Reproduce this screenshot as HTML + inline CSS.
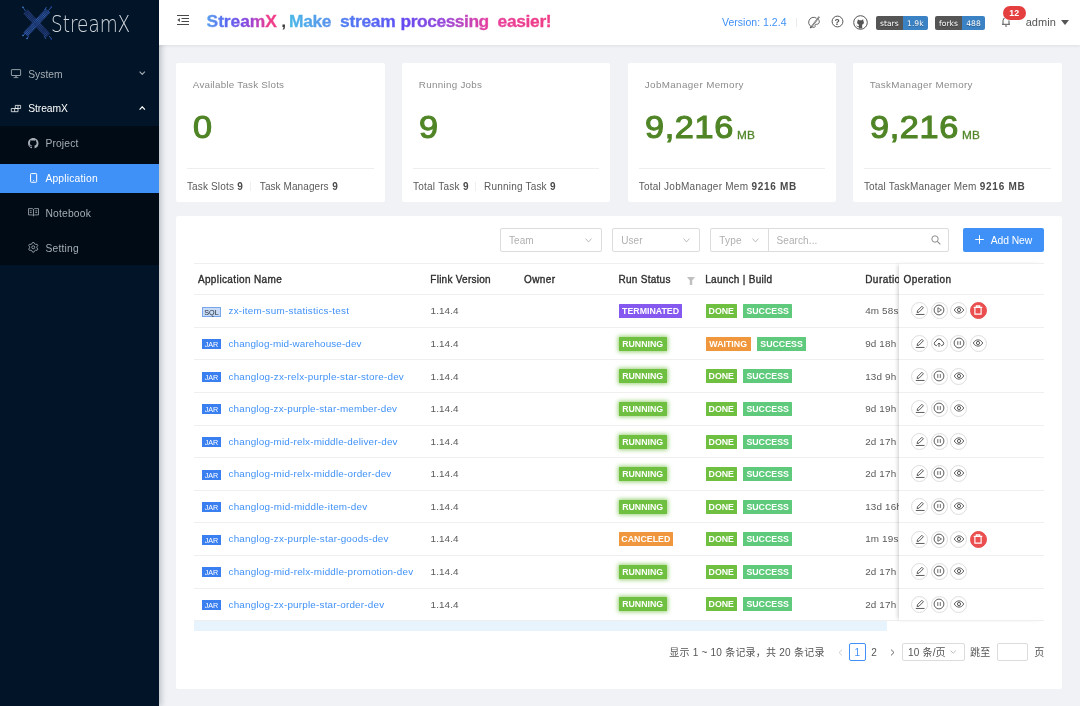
<!DOCTYPE html>
<html lang="en">
<head>
<meta charset="utf-8">
<title>StreamX</title>
<style>
*{box-sizing:border-box;margin:0;padding:0}
html,body{width:1080px;height:706px;overflow:hidden}
body{background:#f0f2f5;font-family:"Liberation Sans","Noto Sans CJK SC",sans-serif;font-size:10px;color:#595959;position:relative}
.abs,.t,svg{position:absolute}
.t{white-space:nowrap;line-height:20px;height:20px}
#side,#head,.card,#tb{will-change:transform}
#side{position:absolute;left:0;top:0;width:159px;height:706px;background:#021528;box-shadow:2px 0 6px rgba(0,21,41,.24);z-index:5}
#sub{position:absolute;left:0;top:126px;width:159px;height:139px;background:#010b16}
#sel{position:absolute;left:0;top:164px;width:159px;height:29px;background:#4091f7}
#head{position:absolute;left:159px;top:0;width:921px;height:45px;background:#fff;box-shadow:0 1px 3px rgba(0,21,41,.08);z-index:6}
.g{-webkit-background-clip:text;background-clip:text;color:transparent;-webkit-text-fill-color:transparent}
.bdg{position:absolute;top:16px;height:14px;border-radius:2px;overflow:hidden;font-family:"DejaVu Sans","Liberation Sans",sans-serif;font-size:7.6px;line-height:14px;color:#fff;white-space:nowrap}
.bdg span{position:absolute;top:0;height:14px;line-height:15px;text-align:center;text-shadow:0 .7px 0 rgba(1,1,1,.3)}
.card{position:absolute;top:63px;height:139px;background:#fff;border-radius:2px}
.hr{position:absolute;height:1px;background:#eeeeee}
#tb{position:absolute;left:176px;top:216px;width:886px;height:473px;background:#fff;border-radius:2px}
.box{position:absolute;border:1px solid #dcdcdc;border-radius:2px;background:#fff}
.hl{position:absolute;height:1px;background:#efefef}
.tg{position:absolute;width:19px;height:10px;font-size:7.2px;line-height:11px;text-align:center}
.tg.jar{background:#3a7ff0;color:#fff}
.tg.sql{background:#c8dbf6;color:#1d2733;border:1px solid #79a6ea;line-height:9px}
.st{position:absolute;height:14.3px;line-height:14.3px;font-size:8.8px;font-weight:bold;color:#fff;text-align:center;border-radius:.5px;white-space:nowrap}
.run{background:#6fbf40;box-shadow:0 0 4px 1px rgba(111,191,64,.7)}
.done{background:#6fbf40}
.suc{background:#5fca7c}
.term{background:#8558f0}
.warn{background:#f0963c}
#fix{position:absolute;left:723px;top:47px;width:145px;height:358px;background:#fff;box-shadow:-3px 0 4px -2px rgba(0,0,0,.2)}
.op{position:absolute;width:17px;height:17px;border-radius:50%;border:1px solid #dedede;background:#fff}
.op svg{left:1.5px;top:1px}
.op.del{background:#ea4e4e;border-color:#ea4e4e}
</style>
</head>
<body>
<div id="side">
<div id="sub"></div>
<div id="sel"></div>
<svg style="left:22px;top:6px" width="31" height="34" viewBox="0 0 31 34"><defs><pattern id="dots" width="1.6" height="1.6" patternUnits="userSpaceOnUse" patternTransform="rotate(41)"><rect width="1.6" height="1.6" fill="#11244f"/><rect width=".9" height=".9" fill="#28488c"/></pattern><pattern id="dots2" width="1.6" height="1.6" patternUnits="userSpaceOnUse" patternTransform="rotate(-41)"><rect width="1.6" height="1.6" fill="#142d63"/><rect width=".9" height=".9" fill="#3564b0"/></pattern></defs>
<path d="M3.500 5.500L26 29.500" stroke="url(#dots)" stroke-width="6" fill="none"/>
<path d="M26 4.500L3.500 28.500" stroke="url(#dots2)" stroke-width="6" fill="none"/>
<path d="M.8 1.200L3.500 5M29.500 1L26.500 4.500M24.500 1L22.500 4M1 29.500L4 27M29.500 33L27 30M24 33L22 30M5 33L6.500 30" stroke="#3565c0" stroke-width=".8" fill="none"/>
<circle cx="1" cy="1.300" r=".8" fill="#4a8ad8"/><circle cx="1" cy="29.500" r=".8" fill="#4a8ad8"/><circle cx="5" cy="32.500" r=".7" fill="#4a8ad8"/><circle cx="29.300" cy="1" r=".7" fill="#2848b0"/><circle cx="29.300" cy="33" r=".7" fill="#2848b0"/></svg><span class="t" style="left:50.8px;top:14px;font-size:22.6px;font-weight:200;color:#d3d8de;font-family:'DejaVu Sans','Liberation Sans',sans-serif;transform:scaleX(.815);transform-origin:0 50%;">StreamX</span>
<svg style="left:10px;top:69px" width="12" height="10" viewBox="0 0 12 10"><rect x="1.400" y=".6" width="9.200" height="5.900" rx=".5" fill="none" stroke="#a6adb4" stroke-width=".9"/><path d="M6 6.900v1.400" stroke="#a6adb4" stroke-width="1.200" fill="none"/><path d="M3.600 8.600h4.800" stroke="#a6adb4" stroke-width=".8" fill="none"/></svg><span class="t" style="left:28.2px;top:65px;font-size:10.3px;color:#a6adb4;letter-spacing:0.011px;">System</span><svg style="left:139px;top:71px" width="6.5" height="4.2" viewBox="0 0 6.5 4.2"><path d="M.6 .6L3.25 3.4000000000000004L5.9 .6" stroke="#a6adb4" stroke-width="1.1" fill="none"/></svg>
<svg style="left:10px;top:104px" width="12" height="9" viewBox="0 0 12 9"><path d="M5.300 1.400h5.300v3.100H5.300zM8 1.400v3.100M1.300 4.500h6.700v3.200H1.300zM4.650 4.500v3.200" stroke="#ffffff" stroke-width=".75" fill="none" stroke-linejoin="miter"/></svg><span class="t" style="left:28.2px;top:99px;font-size:10.3px;color:#ffffff;letter-spacing:-0.06px;">StreamX</span><svg style="left:139px;top:106.3px" width="6.5" height="4.2" viewBox="0 0 6.5 4.2"><path d="M.6 3.6L3.25 .8L5.9 3.6" stroke="#ffffff" stroke-width="1.2" fill="none"/></svg>
<svg style="left:28.2px;top:138.2px" width="10.5" height="10.5" viewBox="0 0 16 16"><path fill="#a6adb4" d="M8 0C3.58 0 0 3.58 0 8c0 3.54 2.29 6.53 5.47 7.59.4.07.55-.17.55-.38 0-.19-.01-.82-.01-1.49-2.01.37-2.53-.49-2.69-.94-.09-.23-.48-.94-.82-1.13-.28-.15-.68-.52-.01-.53.63-.01 1.08.58 1.23.82.72 1.21 1.87.87 2.33.66.07-.52.28-.87.51-1.07-1.78-.2-3.64-.89-3.64-3.95 0-.87.31-1.59.82-2.15-.08-.2-.36-1.02.08-2.12 0 0 .67-.21 2.2.82.64-.18 1.32-.27 2-.27s1.36.09 2 .27c1.53-1.04 2.2-.82 2.2-.82.44 1.1.16 1.92.08 2.12.51.56.82 1.27.82 2.15 0 3.07-1.87 3.75-3.65 3.95.29.25.54.73.54 1.48 0 1.07-.01 1.93-.01 2.2 0 .21.15.46.55.38A8.01 8.01 0 0 0 16 8c0-4.42-3.58-8-8-8z"/></svg><span class="t" style="left:45.4px;top:134px;font-size:10.3px;color:#a6adb4;letter-spacing:0.14px;">Project</span>
<svg style="left:30px;top:173.2px" width="8" height="11" viewBox="0 0 8 11"><rect x=".55" y=".55" width="6.100" height="8.700" rx=".7" fill="none" stroke="#ffffff" stroke-width="1"/><circle cx="3.600" cy="7.600" r=".5" fill="#ffffff"/></svg><span class="t" style="left:45.4px;top:169px;font-size:10.3px;color:#ffffff;letter-spacing:0.192px;">Application</span>
<svg style="left:28px;top:208.3px" width="12" height="9" viewBox="0 0 12 9"><path d="M.5 .6h3.800l1.200.8 1.200-.8h3.800v6.300H6.700L5.500 7.800 4.300 6.900H.5zM5.500 1.400v6.400M1.800 2.800h1.900M1.800 4.500h1.900M7.300 2.800h1.900M7.300 4.500h1.900" stroke="#a6adb4" stroke-width=".8" fill="none"/></svg><span class="t" style="left:45.4px;top:204px;font-size:10.3px;color:#a6adb4;letter-spacing:0.201px;">Notebook</span>
<svg style="left:28.1px;top:242.3px" width="10.5" height="10.6" viewBox="0 0 10.5 10.6"><path d="M4.61 0.44L5.89 0.44L6.67 1.88L7.50 2.36L9.14 2.32L9.78 3.42L8.92 4.82L8.92 5.78L9.78 7.18L9.14 8.28L7.50 8.24L6.67 8.72L5.89 10.16L4.61 10.16L3.83 8.72L3.00 8.24L1.36 8.28L0.72 7.18L1.58 5.78L1.58 4.82L0.72 3.42L1.36 2.32L3.00 2.36L3.83 1.88z" stroke="#a6adb4" stroke-width=".85" fill="none" stroke-linejoin="round"/><circle cx="5.25" cy="5.3" r="1.500" stroke="#a6adb4" stroke-width=".85" fill="none"/></svg><span class="t" style="left:45.4px;top:239px;font-size:10.3px;color:#a6adb4;letter-spacing:0.206px;">Setting</span>
</div>
<div id="head">
<svg style="left:18px;top:15px" width="12" height="10" viewBox="0 0 12 10"><path d="M0 .5h12M4.500 3.500H12M4.500 6.500H12M0 9.500h12" stroke="#4a4a4a" stroke-width="1" fill="none"/><path d="M2.900 2.900v4.200L.3 5z" fill="#4a4a4a"/></svg>
<span class="t g" style="left:47.6px;top:11px;font-size:17.4px;font-weight:bold;letter-spacing:-0.063px;-webkit-text-stroke:.35px transparent;background-image:linear-gradient(90deg,#5a9fee 0%,#5a64f0 30%,#8448e0 55%,#bd43be 73%,#f03d8a 88%);">StreamX</span>
<span class="t" style="left:122.3px;top:11px;font-size:17.4px;font-weight:bold;color:#3a3a3a;">,</span>
<span class="t g" style="left:130.1px;top:11px;font-size:17.4px;font-weight:bold;letter-spacing:-0.405px;-webkit-text-stroke:.35px transparent;background-image:linear-gradient(90deg,#48b8e6 0%,#5b92ec 100%);">Make</span>
<span class="t g" style="left:181.1px;top:11px;font-size:17.4px;font-weight:bold;letter-spacing:-0.289px;-webkit-text-stroke:.35px transparent;background-image:linear-gradient(90deg,#4f80f0 0%,#5d55f5 100%);">stream</span>
<span class="t g" style="left:241.6px;top:11px;font-size:17.4px;font-weight:bold;letter-spacing:-0.465px;-webkit-text-stroke:.35px transparent;background-image:linear-gradient(90deg,#6149f2 0%,#9a4ada 50%,#e83e9c 100%);">processing</span>
<span class="t g" style="left:338.6px;top:11px;font-size:17.4px;font-weight:bold;letter-spacing:-0.346px;-webkit-text-stroke:.35px transparent;background-image:linear-gradient(90deg,#ea3f9a 0%,#ef3d86 100%);">easier!</span>
<span class="t" style="left:563.0px;top:12px;font-size:10.5px;color:#4091f7;letter-spacing:0.022px;">Version: 1.2.4</span>
<div class="abs" style="left:637px;top:18px;width:1px;height:9px;background:#ebebeb"></div>
<svg style="left:648.5px;top:15.5px" width="13" height="13" viewBox="0 0 13 13"><path d="M8.500 2.200A5 5 0 1 0 6 11.300c1.200 0 1.300-.9 1.100-1.500-.3-.8.300-1.600 1.200-1.500 1.600.2 3-.8 3-2.500 0-.9-.3-1.700-.8-2.400" fill="none" stroke="#555" stroke-width=".9"/><path d="M11.300 .8L3.600 10.600l-1.300 1.500" stroke="#555" stroke-width="1.500" fill="none"/><path d="M11.300 .8L3.600 10.600" stroke="#fff" stroke-width=".45" fill="none"/></svg>
<svg style="left:671.7px;top:15.4px" width="13" height="13" viewBox="0 0 13 13"><circle cx="6.500" cy="6.500" r="5.400" fill="none" stroke="#555" stroke-width="1"/></svg><span class="t" style="left:675.5px;top:12px;font-size:8.6px;font-weight:bold;color:#4a4a4a;">?</span>
<svg style="left:694px;top:14.5px" width="15" height="15" viewBox="0 0 15 15"><circle cx="7.500" cy="7.500" r="6.800" fill="#fff" stroke="#555" stroke-width="1"/><path d="M4.900 4.200l1.300 1h2.600l1.300-1 .3 1.800c.5.600.6 1.300.4 2-.3 1-1 1.500-1.900 1.700l.3.900v2.600c-1.100.4-2.300.4-3.400 0v-1.300c-1 .3-1.700-.1-2.100-1l-.6-.6c.8-.1 1 .8 1.700.9.400 0 .7 0 1-.2l.3-1.200C5.200 9.600 4.500 9 4.200 8c-.2-.7-.1-1.400.4-2z" fill="#555"/></svg>
<div class="bdg" style="left:717px;width:52px"><span style="left:0;width:26.700px;background:#555">stars</span><span style="left:26.700px;width:25.300px;background:#3b82c4">1.9k</span></div>
<div class="bdg" style="left:776px;width:50px"><span style="left:0;width:27px;background:#555">forks</span><span style="left:27px;width:23px;background:#3b82c4">488</span></div>
<svg style="left:841.7px;top:16.3px" width="10" height="11" viewBox="0 0 10 11"><path d="M1 8.300h8M2 8.300V4.600a3 3 0 0 1 6 0v3.700M4 10h2" fill="none" stroke="#555" stroke-width="1"/></svg>
<span class="abs" style="left:844px;top:5.500px;width:22.500px;height:14px;border-radius:7px;background:#e53e3e;color:#fff;font-size:8.800px;line-height:14px;text-align:center;font-weight:bold;box-shadow:0 0 0 .5px #fff">12</span>
<span class="t" style="left:866.7px;top:12px;font-size:11px;color:#555;letter-spacing:0.058px;">admin</span>
<svg style="left:902.3px;top:19.5px" width="8" height="5" viewBox="0 0 8 5"><path d="M0 0h8L4 5z" fill="#555"/></svg>
</div>
<div class="card" style="left:176px;width:209px"><span class="t" style="left:16.8px;top:12px;font-size:9.8px;color:#8c8c8c;letter-spacing:0.233px;">Available Task Slots</span><span class="t num" style="left:17.1px;top:54px;font-size:32px;color:#4f8526;letter-spacing:-0.601px;-webkit-text-stroke:1.1px #4f8526;transform:scaleX(1.07);transform-origin:0 50%;">0</span><div class="hr" style="left:11px;right:11px;top:105px"></div><span class="t" style="left:10.9px;top:114px;font-size:10px;color:#5a5a5a;letter-spacing:0.158px;">Task Slots</span><span class="t" style="left:61.3px;top:114px;font-size:10px;font-weight:bold;color:#4a4a4a;">9</span><div class="abs" style="left:74px;top:119px;width:1px;height:9px;background:#efefef"></div><span class="t" style="left:83.8px;top:114px;font-size:10px;color:#5a5a5a;letter-spacing:0.082px;">Task Managers</span><span class="t" style="left:156.3px;top:114px;font-size:10px;font-weight:bold;color:#4a4a4a;">9</span></div>
<div class="card" style="left:402px;width:208px"><span class="t" style="left:16.8px;top:12px;font-size:9.8px;color:#8c8c8c;letter-spacing:0.3px;">Running Jobs</span><span class="t num" style="left:17.1px;top:54px;font-size:32px;color:#4f8526;letter-spacing:-0.601px;-webkit-text-stroke:1.1px #4f8526;transform:scaleX(1.07);transform-origin:0 50%;">9</span><div class="hr" style="left:11px;right:11px;top:105px"></div><span class="t" style="left:10.9px;top:114px;font-size:10px;color:#5a5a5a;letter-spacing:0.267px;">Total Task</span><span class="t" style="left:61.0px;top:114px;font-size:10px;font-weight:bold;color:#4a4a4a;">9</span><div class="abs" style="left:73px;top:119px;width:1px;height:9px;background:#efefef"></div><span class="t" style="left:82.1px;top:114px;font-size:10px;color:#5a5a5a;letter-spacing:0.189px;">Running Task</span><span class="t" style="left:148.0px;top:114px;font-size:10px;font-weight:bold;color:#4a4a4a;">9</span></div>
<div class="card" style="left:628px;width:208px"><span class="t" style="left:16.8px;top:12px;font-size:9.8px;color:#8c8c8c;letter-spacing:0.383px;">JobManager Memory</span><span class="t num" style="left:17.1px;top:54px;font-size:32px;color:#4f8526;letter-spacing:0.588px;-webkit-text-stroke:1.1px #4f8526;transform:scaleX(1.07);transform-origin:0 50%;">9,216</span><span class="t" style="left:108.9px;top:62px;font-size:11.8px;color:#4f8526;letter-spacing:0.297px;-webkit-text-stroke:.3px #4f8526;">MB</span><div class="hr" style="left:11px;right:11px;top:105px"></div><span class="t" style="left:10.7px;top:114px;font-size:10px;color:#5a5a5a;letter-spacing:0.253px;">Total JobManager Mem</span><span class="t" style="left:123.4px;top:114px;font-size:10px;font-weight:bold;color:#4a4a4a;letter-spacing:0.72px;">9216 MB</span></div>
<div class="card" style="left:853px;width:209px"><span class="t" style="left:16.8px;top:12px;font-size:9.8px;color:#8c8c8c;letter-spacing:0.342px;">TaskManager Memory</span><span class="t num" style="left:17.1px;top:54px;font-size:32px;color:#4f8526;letter-spacing:0.588px;-webkit-text-stroke:1.1px #4f8526;transform:scaleX(1.07);transform-origin:0 50%;">9,216</span><span class="t" style="left:108.9px;top:62px;font-size:11.8px;color:#4f8526;letter-spacing:0.297px;-webkit-text-stroke:.3px #4f8526;">MB</span><div class="hr" style="left:11px;right:11px;top:105px"></div><span class="t" style="left:10.9px;top:114px;font-size:10px;color:#5a5a5a;letter-spacing:0.188px;">Total TaskManager Mem</span><span class="t" style="left:126.8px;top:114px;font-size:10px;font-weight:bold;color:#4a4a4a;letter-spacing:0.72px;">9216 MB</span></div>
<div id="tb">
<div class="box" style="left:324px;top:12px;width:102px;height:24px"></div><span class="t" style="left:332.9px;top:15px;font-size:10px;color:#b0b0b0;letter-spacing:0.116px;">Team</span><svg style="left:409.2px;top:21.5px" width="7" height="4.8" viewBox="0 0 7 4.8"><path d="M.6 .6L3.5 4.0L6.4 .6" stroke="#b5b5b5" stroke-width="0.9" fill="none"/></svg>
<div class="box" style="left:436px;top:12px;width:88px;height:24px"></div><span class="t" style="left:445.3px;top:15px;font-size:10px;color:#b0b0b0;letter-spacing:0.025px;">User</span><svg style="left:506.8px;top:21.5px" width="7" height="4.8" viewBox="0 0 7 4.8"><path d="M.6 .6L3.5 4.0L6.4 .6" stroke="#b5b5b5" stroke-width="0.9" fill="none"/></svg>
<div class="box" style="left:534px;top:12px;width:239px;height:24px"></div><div class="abs" style="left:592px;top:12px;width:1px;height:24px;background:#dcdcdc"></div><span class="t" style="left:543.3px;top:15px;font-size:10px;color:#b0b0b0;letter-spacing:0.171px;">Type</span><svg style="left:575.7px;top:21.5px" width="7" height="4.8" viewBox="0 0 7 4.8"><path d="M.6 .6L3.5 4.0L6.4 .6" stroke="#b5b5b5" stroke-width="0.9" fill="none"/></svg><span class="t" style="left:600.5px;top:15px;font-size:10px;color:#b0b0b0;letter-spacing:0.096px;">Search...</span><svg style="left:754.5px;top:19px" width="10" height="10" viewBox="0 0 10 10"><circle cx="4" cy="4" r="3.200" fill="none" stroke="#8c8c8c" stroke-width="1"/><path d="M6.300 6.300L9.300 9.300" stroke="#8c8c8c" stroke-width="1.100"/></svg>
<div class="abs" style="left:787px;top:12px;width:81px;height:24px;background:#4091f7;border-radius:2px"></div><svg style="left:799px;top:19px" width="9" height="9" viewBox="0 0 9 9"><path d="M4.500 .2v8.600M.2 4.500h8.600" stroke="#fff" stroke-width="1"/></svg><span class="t" style="left:814.7px;top:15px;font-size:10.3px;color:#fff;letter-spacing:-0.047px;">Add New</span>
<div class="hl" style="left:18px;width:850px;top:47px"></div>
<div class="hl" style="left:18px;width:850px;top:78px"></div>
<span class="t" style="left:21.9px;top:54px;font-size:10px;color:#2e2e2e;letter-spacing:0.368px;-webkit-text-stroke:.35px #2e2e2e;">Application Name</span>
<span class="t" style="left:254.3px;top:54px;font-size:10px;color:#2e2e2e;letter-spacing:0.254px;-webkit-text-stroke:.35px #2e2e2e;">Flink Version</span>
<span class="t" style="left:348.0px;top:54px;font-size:10px;color:#2e2e2e;letter-spacing:0.437px;-webkit-text-stroke:.35px #2e2e2e;">Owner</span>
<span class="t" style="left:442.5px;top:54px;font-size:10px;color:#2e2e2e;letter-spacing:0.268px;-webkit-text-stroke:.35px #2e2e2e;">Run Status</span>
<span class="t" style="left:529.2px;top:54px;font-size:10px;color:#2e2e2e;letter-spacing:0.284px;-webkit-text-stroke:.35px #2e2e2e;">Launch | Build</span>
<span class="t" style="left:689.2px;top:54px;font-size:10px;color:#2e2e2e;letter-spacing:0.455px;-webkit-text-stroke:.35px #2e2e2e;">Duration</span>
<svg style="left:511.3px;top:60.6px" width="8" height="8" viewBox="0 0 8 8"><path d="M0 0h8L5.200 3.600V8H2.800V3.600z" fill="#bfbfbf"/></svg>
<span class="tg sql" style="left:26px;top:91px">SQL</span><span class="t" style="left:52.5px;top:85px;font-size:9.9px;color:#4091f7;letter-spacing:0.245px;">zx-item-sum-statistics-test</span><span class="t" style="left:254.6px;top:85px;font-size:9.9px;color:#595959;letter-spacing:0.086px;">1.14.4</span><span class="st term" style="left:442.8px;top:88.0px;width:63.6px">TERMINATED</span><span class="st done" style="left:529.6px;top:88.0px;width:31.3px">DONE</span><span class="st suc" style="left:567.3px;top:88.0px;width:48.700px">SUCCESS</span><span class="t" style="left:689.2px;top:85px;font-size:9.9px;color:#595959;letter-spacing:.15px;">4m 58s</span><div class="hl" style="left:18px;width:850px;top:111px"></div>
<span class="tg jar" style="left:26px;top:123px">JAR</span><span class="t" style="left:52.5px;top:118px;font-size:9.9px;color:#4091f7;letter-spacing:0.116px;">changlog-mid-warehouse-dev</span><span class="t" style="left:254.6px;top:118px;font-size:9.9px;color:#595959;letter-spacing:0.086px;">1.14.4</span><span class="st run" style="left:442.8px;top:121.0px;width:47.8px">RUNNING</span><span class="st warn" style="left:529.6px;top:121.0px;width:45.2px">WAITING</span><span class="st suc" style="left:581.2px;top:121.0px;width:48.700px">SUCCESS</span><span class="t" style="left:689.2px;top:118px;font-size:9.9px;color:#595959;letter-spacing:.15px;">9d 18h</span><div class="hl" style="left:18px;width:850px;top:143px"></div>
<span class="tg jar" style="left:26px;top:156px">JAR</span><span class="t" style="left:52.5px;top:151px;font-size:9.9px;color:#4091f7;letter-spacing:0.214px;">changlog-zx-relx-purple-star-store-dev</span><span class="t" style="left:254.6px;top:151px;font-size:9.9px;color:#595959;letter-spacing:0.086px;">1.14.4</span><span class="st run" style="left:442.8px;top:153.0px;width:47.8px">RUNNING</span><span class="st done" style="left:529.6px;top:153.0px;width:31.3px">DONE</span><span class="st suc" style="left:567.3px;top:153.0px;width:48.700px">SUCCESS</span><span class="t" style="left:689.2px;top:151px;font-size:9.9px;color:#595959;letter-spacing:.15px;">13d 9h</span><div class="hl" style="left:18px;width:850px;top:176px"></div>
<span class="tg jar" style="left:26px;top:188px">JAR</span><span class="t" style="left:52.5px;top:183px;font-size:9.9px;color:#4091f7;letter-spacing:0.183px;">changlog-zx-purple-star-member-dev</span><span class="t" style="left:254.6px;top:183px;font-size:9.9px;color:#595959;letter-spacing:0.086px;">1.14.4</span><span class="st run" style="left:442.8px;top:186.0px;width:47.8px">RUNNING</span><span class="st done" style="left:529.6px;top:186.0px;width:31.3px">DONE</span><span class="st suc" style="left:567.3px;top:186.0px;width:48.700px">SUCCESS</span><span class="t" style="left:689.2px;top:183px;font-size:9.9px;color:#595959;letter-spacing:.15px;">9d 19h</span><div class="hl" style="left:18px;width:850px;top:209px"></div>
<span class="tg jar" style="left:26px;top:221px">JAR</span><span class="t" style="left:52.5px;top:216px;font-size:9.9px;color:#4091f7;letter-spacing:0.187px;">changlog-mid-relx-middle-deliver-dev</span><span class="t" style="left:254.6px;top:216px;font-size:9.9px;color:#595959;letter-spacing:0.086px;">1.14.4</span><span class="st run" style="left:442.8px;top:219.0px;width:47.8px">RUNNING</span><span class="st done" style="left:529.6px;top:219.0px;width:31.3px">DONE</span><span class="st suc" style="left:567.3px;top:219.0px;width:48.700px">SUCCESS</span><span class="t" style="left:689.2px;top:216px;font-size:9.9px;color:#595959;letter-spacing:.15px;">2d 17h</span><div class="hl" style="left:18px;width:850px;top:241px"></div>
<span class="tg jar" style="left:26px;top:254px">JAR</span><span class="t" style="left:52.5px;top:248px;font-size:9.9px;color:#4091f7;letter-spacing:0.193px;">changlog-mid-relx-middle-order-dev</span><span class="t" style="left:254.6px;top:248px;font-size:9.9px;color:#595959;letter-spacing:0.086px;">1.14.4</span><span class="st run" style="left:442.8px;top:251.0px;width:47.8px">RUNNING</span><span class="st done" style="left:529.6px;top:251.0px;width:31.3px">DONE</span><span class="st suc" style="left:567.3px;top:251.0px;width:48.700px">SUCCESS</span><span class="t" style="left:689.2px;top:248px;font-size:9.9px;color:#595959;letter-spacing:.15px;">2d 17h</span><div class="hl" style="left:18px;width:850px;top:274px"></div>
<span class="tg jar" style="left:26px;top:286px">JAR</span><span class="t" style="left:52.5px;top:281px;font-size:9.9px;color:#4091f7;letter-spacing:0.217px;">changlog-mid-middle-item-dev</span><span class="t" style="left:254.6px;top:281px;font-size:9.9px;color:#595959;letter-spacing:0.086px;">1.14.4</span><span class="st run" style="left:442.8px;top:284.0px;width:47.8px">RUNNING</span><span class="st done" style="left:529.6px;top:284.0px;width:31.3px">DONE</span><span class="st suc" style="left:567.3px;top:284.0px;width:48.700px">SUCCESS</span><span class="t" style="left:689.2px;top:281px;font-size:9.9px;color:#595959;letter-spacing:.15px;">13d 16h</span><div class="hl" style="left:18px;width:850px;top:306px"></div>
<span class="tg jar" style="left:26px;top:319px">JAR</span><span class="t" style="left:52.5px;top:313px;font-size:9.9px;color:#4091f7;letter-spacing:0.214px;">changlog-zx-purple-star-goods-dev</span><span class="t" style="left:254.6px;top:313px;font-size:9.9px;color:#595959;letter-spacing:0.086px;">1.14.4</span><span class="st warn" style="left:442.8px;top:316.0px;width:54px">CANCELED</span><span class="st done" style="left:529.6px;top:316.0px;width:31.3px">DONE</span><span class="st suc" style="left:567.3px;top:316.0px;width:48.700px">SUCCESS</span><span class="t" style="left:689.2px;top:313px;font-size:9.9px;color:#595959;letter-spacing:.15px;">1m 19s</span><div class="hl" style="left:18px;width:850px;top:339px"></div>
<span class="tg jar" style="left:26px;top:351px">JAR</span><span class="t" style="left:52.5px;top:346px;font-size:9.9px;color:#4091f7;letter-spacing:0.198px;">changlog-mid-relx-middle-promotion-dev</span><span class="t" style="left:254.6px;top:346px;font-size:9.9px;color:#595959;letter-spacing:0.086px;">1.14.4</span><span class="st run" style="left:442.8px;top:349.0px;width:47.8px">RUNNING</span><span class="st done" style="left:529.6px;top:349.0px;width:31.3px">DONE</span><span class="st suc" style="left:567.3px;top:349.0px;width:48.700px">SUCCESS</span><span class="t" style="left:689.2px;top:346px;font-size:9.9px;color:#595959;letter-spacing:.15px;">2d 17h</span><div class="hl" style="left:18px;width:850px;top:372px"></div>
<span class="tg jar" style="left:26px;top:384px">JAR</span><span class="t" style="left:52.5px;top:379px;font-size:9.9px;color:#4091f7;letter-spacing:0.197px;">changlog-zx-purple-star-order-dev</span><span class="t" style="left:254.6px;top:379px;font-size:9.9px;color:#595959;letter-spacing:0.086px;">1.14.4</span><span class="st run" style="left:442.8px;top:381.0px;width:47.8px">RUNNING</span><span class="st done" style="left:529.6px;top:381.0px;width:31.3px">DONE</span><span class="st suc" style="left:567.3px;top:381.0px;width:48.700px">SUCCESS</span><span class="t" style="left:689.2px;top:379px;font-size:9.9px;color:#595959;letter-spacing:.15px;">2d 17h</span><div class="hl" style="left:18px;width:850px;top:404px"></div>
<div class="abs" style="left:18px;top:405px;width:693px;height:10px;background:#e8f4fd"></div>
<div id="fix" style="left:723px;top:47px;width:145px;height:358px">
<span class="t" style="left:4.5px;top:7px;font-size:10px;color:#2e2e2e;letter-spacing:0.447px;-webkit-text-stroke:.35px #2e2e2e;">Operation</span>
<div class="hl" style="left:0;width:145px;top:0"></div><div class="hl" style="left:0;width:145px;top:31px"></div>
<div class="op" style="left:12.0px;top:39px"><svg width="12" height="12" viewBox="0 0 12 12"><path d="M3.100 8.500L3.500 6.700L7.900 2.300l1.500 1.500L5 8.200z" fill="none" stroke="#484848" stroke-width=".9" stroke-linejoin="round"/><path d="M1.800 10.450h8.700" stroke="#484848" stroke-width=".9"/></svg></div><div class="op" style="left:31.6px;top:39px"><svg width="12" height="12" viewBox="0 0 12 12"><circle cx="6" cy="6" r="4.900" fill="none" stroke="#484848" stroke-width=".9"/><path d="M4.900 3.700v4.600L8.500 6z" fill="none" stroke="#484848" stroke-width=".8" stroke-linejoin="round"/></svg></div><div class="op" style="left:51.2px;top:39px"><svg width="12" height="12" viewBox="0 0 12 12"><path d="M1.300 6C2.400 4 4 2.900 6 2.900S9.600 4 10.700 6C9.600 8 8 9.100 6 9.100S2.400 8 1.300 6z" fill="none" stroke="#484848" stroke-width=".9"/><circle cx="6" cy="6" r="1.600" fill="none" stroke="#484848" stroke-width=".9"/></svg></div><div class="op del" style="left:70.8px;top:39px"><svg width="12" height="12" viewBox="0 0 12 12"><path d="M1.700 3.400h8.600M4.300 3.300V1.800h3.400v1.500M2.900 3.600v6.500h6.200V3.600" fill="none" stroke="#fff" stroke-width="1.150"/></svg></div>
<div class="hl" style="left:0;width:145px;top:64px"></div>
<div class="op" style="left:12.0px;top:72px"><svg width="12" height="12" viewBox="0 0 12 12"><path d="M3.100 8.500L3.500 6.700L7.900 2.300l1.500 1.500L5 8.200z" fill="none" stroke="#484848" stroke-width=".9" stroke-linejoin="round"/><path d="M1.800 10.450h8.700" stroke="#484848" stroke-width=".9"/></svg></div><div class="op" style="left:31.6px;top:72px"><svg width="12" height="12" viewBox="0 0 12 12"><path d="M4 8.600H3.200A2.200 2.200 0 0 1 2.900 4.300 3.200 3.200 0 0 1 9.100 4.300 2.200 2.200 0 0 1 8.800 8.600H8" fill="none" stroke="#484848" stroke-width=".9"/><path d="M6 10V6.200M4.500 7.500L6 6l1.500 1.500" fill="none" stroke="#484848" stroke-width=".9"/></svg></div><div class="op" style="left:51.2px;top:72px"><svg width="12" height="12" viewBox="0 0 12 12"><circle cx="6" cy="6" r="4.900" fill="none" stroke="#484848" stroke-width=".9"/><path d="M4.800 4.100v3.800M7.300 4.100v3.800" fill="none" stroke="#484848" stroke-width=".85"/></svg></div><div class="op" style="left:70.8px;top:72px"><svg width="12" height="12" viewBox="0 0 12 12"><path d="M1.300 6C2.400 4 4 2.900 6 2.900S9.600 4 10.700 6C9.600 8 8 9.100 6 9.100S2.400 8 1.300 6z" fill="none" stroke="#484848" stroke-width=".9"/><circle cx="6" cy="6" r="1.600" fill="none" stroke="#484848" stroke-width=".9"/></svg></div>
<div class="hl" style="left:0;width:145px;top:96px"></div>
<div class="op" style="left:12.0px;top:105px"><svg width="12" height="12" viewBox="0 0 12 12"><path d="M3.100 8.500L3.500 6.700L7.900 2.300l1.500 1.500L5 8.200z" fill="none" stroke="#484848" stroke-width=".9" stroke-linejoin="round"/><path d="M1.800 10.450h8.700" stroke="#484848" stroke-width=".9"/></svg></div><div class="op" style="left:31.6px;top:105px"><svg width="12" height="12" viewBox="0 0 12 12"><circle cx="6" cy="6" r="4.900" fill="none" stroke="#484848" stroke-width=".9"/><path d="M4.800 4.100v3.800M7.300 4.100v3.800" fill="none" stroke="#484848" stroke-width=".85"/></svg></div><div class="op" style="left:51.2px;top:105px"><svg width="12" height="12" viewBox="0 0 12 12"><path d="M1.300 6C2.400 4 4 2.900 6 2.900S9.600 4 10.700 6C9.600 8 8 9.100 6 9.100S2.400 8 1.300 6z" fill="none" stroke="#484848" stroke-width=".9"/><circle cx="6" cy="6" r="1.600" fill="none" stroke="#484848" stroke-width=".9"/></svg></div>
<div class="hl" style="left:0;width:145px;top:129px"></div>
<div class="op" style="left:12.0px;top:137px"><svg width="12" height="12" viewBox="0 0 12 12"><path d="M3.100 8.500L3.500 6.700L7.900 2.300l1.500 1.500L5 8.200z" fill="none" stroke="#484848" stroke-width=".9" stroke-linejoin="round"/><path d="M1.800 10.450h8.700" stroke="#484848" stroke-width=".9"/></svg></div><div class="op" style="left:31.6px;top:137px"><svg width="12" height="12" viewBox="0 0 12 12"><circle cx="6" cy="6" r="4.900" fill="none" stroke="#484848" stroke-width=".9"/><path d="M4.800 4.100v3.800M7.300 4.100v3.800" fill="none" stroke="#484848" stroke-width=".85"/></svg></div><div class="op" style="left:51.2px;top:137px"><svg width="12" height="12" viewBox="0 0 12 12"><path d="M1.300 6C2.400 4 4 2.900 6 2.900S9.600 4 10.700 6C9.600 8 8 9.100 6 9.100S2.400 8 1.300 6z" fill="none" stroke="#484848" stroke-width=".9"/><circle cx="6" cy="6" r="1.600" fill="none" stroke="#484848" stroke-width=".9"/></svg></div>
<div class="hl" style="left:0;width:145px;top:162px"></div>
<div class="op" style="left:12.0px;top:170px"><svg width="12" height="12" viewBox="0 0 12 12"><path d="M3.100 8.500L3.500 6.700L7.900 2.300l1.500 1.500L5 8.200z" fill="none" stroke="#484848" stroke-width=".9" stroke-linejoin="round"/><path d="M1.800 10.450h8.700" stroke="#484848" stroke-width=".9"/></svg></div><div class="op" style="left:31.6px;top:170px"><svg width="12" height="12" viewBox="0 0 12 12"><circle cx="6" cy="6" r="4.900" fill="none" stroke="#484848" stroke-width=".9"/><path d="M4.800 4.100v3.800M7.300 4.100v3.800" fill="none" stroke="#484848" stroke-width=".85"/></svg></div><div class="op" style="left:51.2px;top:170px"><svg width="12" height="12" viewBox="0 0 12 12"><path d="M1.300 6C2.400 4 4 2.900 6 2.900S9.600 4 10.700 6C9.600 8 8 9.100 6 9.100S2.400 8 1.300 6z" fill="none" stroke="#484848" stroke-width=".9"/><circle cx="6" cy="6" r="1.600" fill="none" stroke="#484848" stroke-width=".9"/></svg></div>
<div class="hl" style="left:0;width:145px;top:194px"></div>
<div class="op" style="left:12.0px;top:202px"><svg width="12" height="12" viewBox="0 0 12 12"><path d="M3.100 8.500L3.500 6.700L7.900 2.300l1.500 1.500L5 8.200z" fill="none" stroke="#484848" stroke-width=".9" stroke-linejoin="round"/><path d="M1.800 10.450h8.700" stroke="#484848" stroke-width=".9"/></svg></div><div class="op" style="left:31.6px;top:202px"><svg width="12" height="12" viewBox="0 0 12 12"><circle cx="6" cy="6" r="4.900" fill="none" stroke="#484848" stroke-width=".9"/><path d="M4.800 4.100v3.800M7.300 4.100v3.800" fill="none" stroke="#484848" stroke-width=".85"/></svg></div><div class="op" style="left:51.2px;top:202px"><svg width="12" height="12" viewBox="0 0 12 12"><path d="M1.300 6C2.400 4 4 2.900 6 2.900S9.600 4 10.700 6C9.600 8 8 9.100 6 9.100S2.400 8 1.300 6z" fill="none" stroke="#484848" stroke-width=".9"/><circle cx="6" cy="6" r="1.600" fill="none" stroke="#484848" stroke-width=".9"/></svg></div>
<div class="hl" style="left:0;width:145px;top:227px"></div>
<div class="op" style="left:12.0px;top:235px"><svg width="12" height="12" viewBox="0 0 12 12"><path d="M3.100 8.500L3.500 6.700L7.900 2.300l1.500 1.500L5 8.200z" fill="none" stroke="#484848" stroke-width=".9" stroke-linejoin="round"/><path d="M1.800 10.450h8.700" stroke="#484848" stroke-width=".9"/></svg></div><div class="op" style="left:31.6px;top:235px"><svg width="12" height="12" viewBox="0 0 12 12"><circle cx="6" cy="6" r="4.900" fill="none" stroke="#484848" stroke-width=".9"/><path d="M4.800 4.100v3.800M7.300 4.100v3.800" fill="none" stroke="#484848" stroke-width=".85"/></svg></div><div class="op" style="left:51.2px;top:235px"><svg width="12" height="12" viewBox="0 0 12 12"><path d="M1.300 6C2.400 4 4 2.900 6 2.900S9.600 4 10.700 6C9.600 8 8 9.100 6 9.100S2.400 8 1.300 6z" fill="none" stroke="#484848" stroke-width=".9"/><circle cx="6" cy="6" r="1.600" fill="none" stroke="#484848" stroke-width=".9"/></svg></div>
<div class="hl" style="left:0;width:145px;top:259px"></div>
<div class="op" style="left:12.0px;top:268px"><svg width="12" height="12" viewBox="0 0 12 12"><path d="M3.100 8.500L3.500 6.700L7.900 2.300l1.500 1.500L5 8.200z" fill="none" stroke="#484848" stroke-width=".9" stroke-linejoin="round"/><path d="M1.800 10.450h8.700" stroke="#484848" stroke-width=".9"/></svg></div><div class="op" style="left:31.6px;top:268px"><svg width="12" height="12" viewBox="0 0 12 12"><circle cx="6" cy="6" r="4.900" fill="none" stroke="#484848" stroke-width=".9"/><path d="M4.900 3.700v4.600L8.500 6z" fill="none" stroke="#484848" stroke-width=".8" stroke-linejoin="round"/></svg></div><div class="op" style="left:51.2px;top:268px"><svg width="12" height="12" viewBox="0 0 12 12"><path d="M1.300 6C2.400 4 4 2.900 6 2.900S9.600 4 10.700 6C9.600 8 8 9.100 6 9.100S2.400 8 1.300 6z" fill="none" stroke="#484848" stroke-width=".9"/><circle cx="6" cy="6" r="1.600" fill="none" stroke="#484848" stroke-width=".9"/></svg></div><div class="op del" style="left:70.8px;top:268px"><svg width="12" height="12" viewBox="0 0 12 12"><path d="M1.700 3.400h8.600M4.300 3.300V1.800h3.400v1.500M2.900 3.600v6.500h6.200V3.600" fill="none" stroke="#fff" stroke-width="1.150"/></svg></div>
<div class="hl" style="left:0;width:145px;top:292px"></div>
<div class="op" style="left:12.0px;top:300px"><svg width="12" height="12" viewBox="0 0 12 12"><path d="M3.100 8.500L3.500 6.700L7.900 2.300l1.500 1.500L5 8.200z" fill="none" stroke="#484848" stroke-width=".9" stroke-linejoin="round"/><path d="M1.800 10.450h8.700" stroke="#484848" stroke-width=".9"/></svg></div><div class="op" style="left:31.6px;top:300px"><svg width="12" height="12" viewBox="0 0 12 12"><circle cx="6" cy="6" r="4.900" fill="none" stroke="#484848" stroke-width=".9"/><path d="M4.800 4.100v3.800M7.300 4.100v3.800" fill="none" stroke="#484848" stroke-width=".85"/></svg></div><div class="op" style="left:51.2px;top:300px"><svg width="12" height="12" viewBox="0 0 12 12"><path d="M1.300 6C2.400 4 4 2.900 6 2.900S9.600 4 10.700 6C9.600 8 8 9.100 6 9.100S2.400 8 1.300 6z" fill="none" stroke="#484848" stroke-width=".9"/><circle cx="6" cy="6" r="1.600" fill="none" stroke="#484848" stroke-width=".9"/></svg></div>
<div class="hl" style="left:0;width:145px;top:325px"></div>
<div class="op" style="left:12.0px;top:333px"><svg width="12" height="12" viewBox="0 0 12 12"><path d="M3.100 8.500L3.500 6.700L7.900 2.300l1.500 1.500L5 8.200z" fill="none" stroke="#484848" stroke-width=".9" stroke-linejoin="round"/><path d="M1.800 10.450h8.700" stroke="#484848" stroke-width=".9"/></svg></div><div class="op" style="left:31.6px;top:333px"><svg width="12" height="12" viewBox="0 0 12 12"><circle cx="6" cy="6" r="4.900" fill="none" stroke="#484848" stroke-width=".9"/><path d="M4.800 4.100v3.800M7.300 4.100v3.800" fill="none" stroke="#484848" stroke-width=".85"/></svg></div><div class="op" style="left:51.2px;top:333px"><svg width="12" height="12" viewBox="0 0 12 12"><path d="M1.300 6C2.400 4 4 2.900 6 2.900S9.600 4 10.700 6C9.600 8 8 9.100 6 9.100S2.400 8 1.300 6z" fill="none" stroke="#484848" stroke-width=".9"/><circle cx="6" cy="6" r="1.600" fill="none" stroke="#484848" stroke-width=".9"/></svg></div>
<div class="hl" style="left:0;width:145px;top:357px"></div>
</div>
<span class="t" style="left:493.2px;top:427px;font-size:10px;color:#555;letter-spacing:0.232px;">显示 1 ~ 10 条记录，共 20 条记录</span>
<svg style="left:662.3px;top:432.5px" width="5" height="7" viewBox="0 0 5 7"><path d="M4 .6L1 3.500L4 6.400" stroke="#c8c8c8" stroke-width=".9" fill="none"/></svg><div class="box" style="left:672.5px;top:427px;width:17.500px;height:17.500px;border-color:#4091f7"></div><span class="t" style="left:678.6px;top:427px;font-size:10px;color:#4091f7;">1</span><span class="t" style="left:695.3px;top:427px;font-size:10px;color:#555;">2</span><svg style="left:714.2px;top:432.5px" width="5" height="7" viewBox="0 0 5 7"><path d="M1 .6L4 3.500L1 6.400" stroke="#555" stroke-width=".9" fill="none"/></svg>
<div class="box" style="left:726.3px;top:427px;width:62.700px;height:17.500px"></div><span class="t" style="left:732.1px;top:427px;font-size:10px;color:#555;letter-spacing:0.163px;">10 条/页</span><svg style="left:773.7px;top:433.8px" width="6.5" height="4" viewBox="0 0 6.5 4"><path d="M.6 .6L3.25 3.2L5.9 .6" stroke="#b5b5b5" stroke-width="0.9" fill="none"/></svg>
<span class="t" style="left:794.0px;top:427px;font-size:10px;color:#555;letter-spacing:0.2px;">跳至</span><div class="box" style="left:820.8px;top:427px;width:31.500px;height:17.500px"></div><span class="t" style="left:858.2px;top:427px;font-size:10px;color:#555;">页</span>
</div>
</body>
</html>
